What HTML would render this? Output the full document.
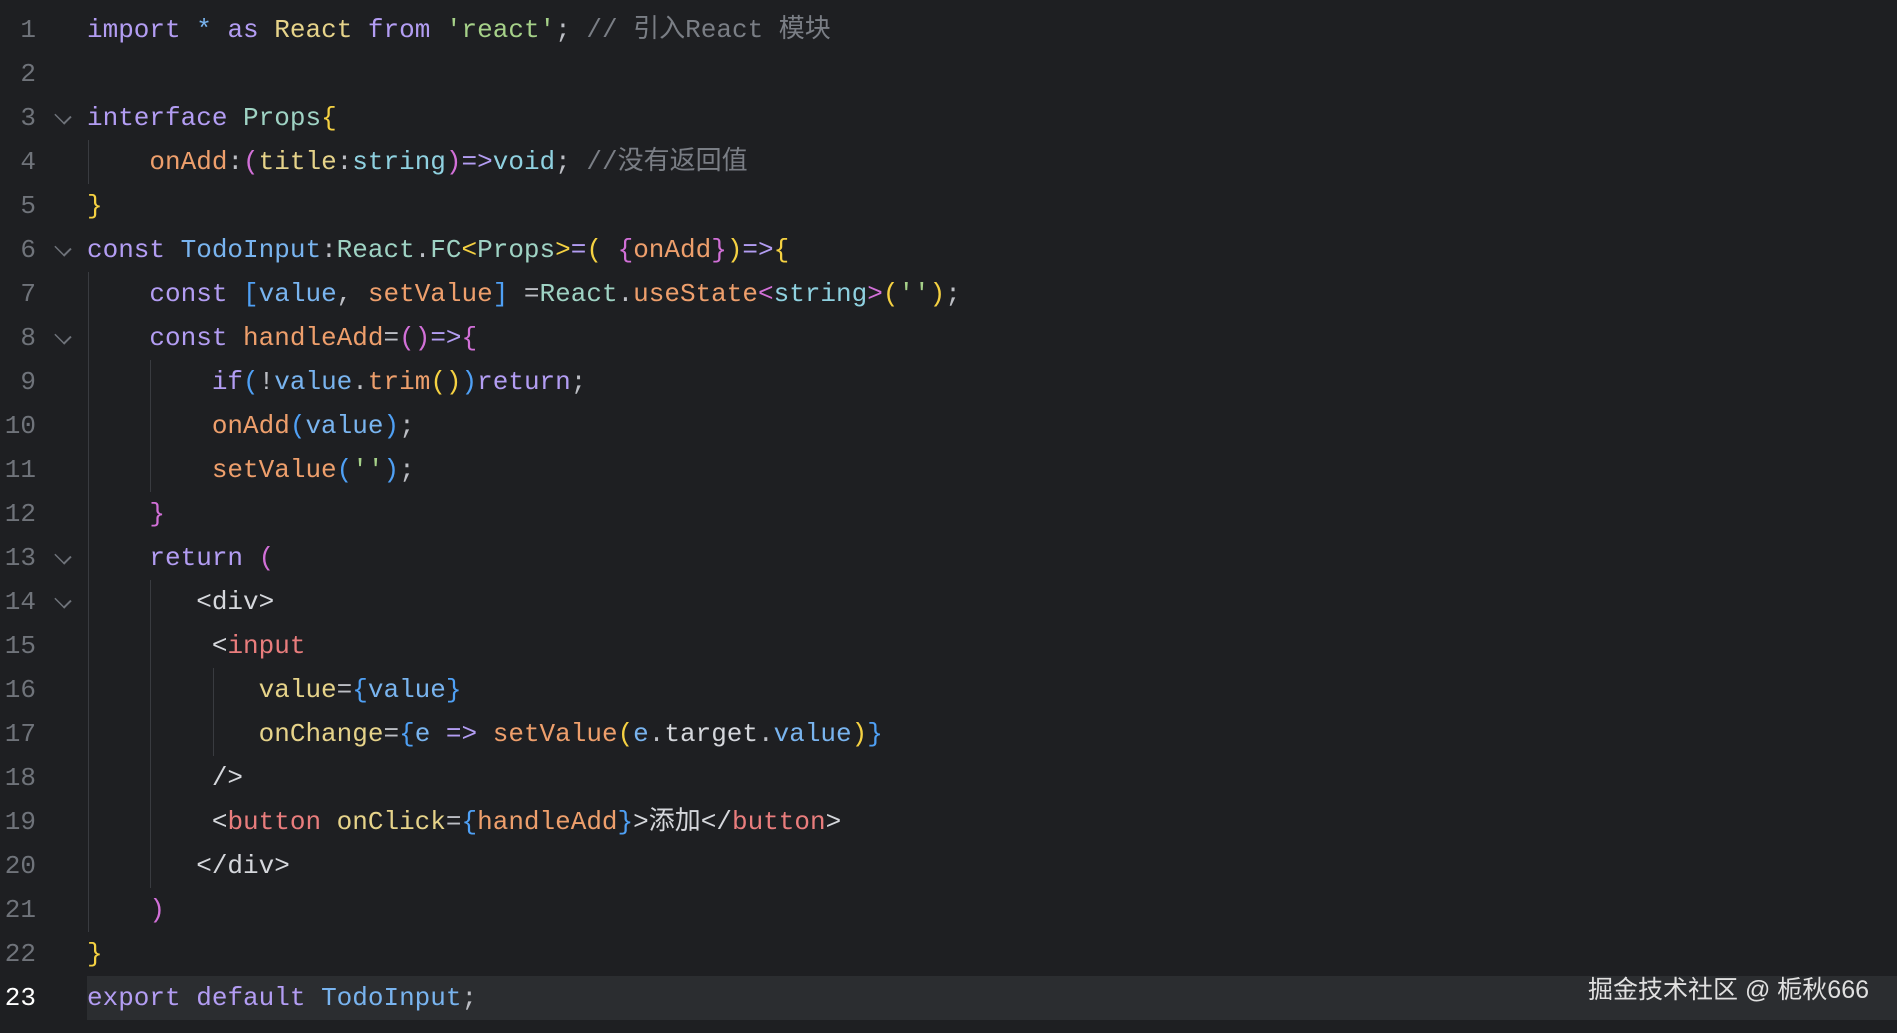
<!DOCTYPE html>
<html><head><meta charset="utf-8"><style>
body{margin:0;width:1897px;height:1033px;background:#1e1f22;overflow:hidden;position:relative;font-family:"Liberation Mono","Noto Sans CJK SC",monospace;font-size:26px;}
.l{position:absolute;left:0;height:44px;line-height:44px;white-space:pre;}
.n{position:absolute;left:0;width:36px;text-align:right;color:#6f737a;font-size:26px}
.c{position:absolute;left:87px;color:#bcbec4}
.f{position:absolute;left:56px;top:13px;width:12px;height:12px;border-right:2px solid #6f737a;border-bottom:2px solid #6f737a;transform:rotate(45deg) scale(1,0.75)}
.g{position:absolute;width:1px;background:#393b40}
.k{color:#b39df3}.y{color:#e6d38a}.t{color:#9fd3c4}.b{color:#79b4ef}.s{color:#a6d189}.o{color:#ee9f6c}.ty{color:#8fd1e0}.cm{color:#7a7e85}
.p1{color:#f5d142}.p2{color:#d270d8}.p3{color:#4fa0f5}.at{color:#e6d38a}.tg{color:#e97d7d}.w{color:#d5d7dc}
</style></head><body>
<div style="position:absolute;left:87px;top:976px;width:1810px;height:44px;background:#2b2d30"></div>
<div class="g" style="left:88px;top:140px;height:44px"></div>
<div class="g" style="left:88px;top:272px;height:660px"></div>
<div class="g" style="left:150px;top:360px;height:132px"></div>
<div class="g" style="left:150px;top:580px;height:308px"></div>
<div class="g" style="left:213px;top:668px;height:88px"></div>

<div class="l" style="top:8px"><span class="n">1</span><span class="c"><span class="k">import</span> <span class="b">*</span> <span class="k">as</span> <span class="y">React</span> <span class="k">from</span> <span class="s">'react'</span>; <span class="cm">// 引入React 模块</span></span></div>
<div class="l" style="top:52px"><span class="n">2</span></div>
<div class="l" style="top:96px"><span class="n">3</span><i class="f"></i><span class="c"><span class="k">interface</span> <span class="t">Props</span><span class="p1">{</span></span></div>
<div class="l" style="top:140px"><span class="n">4</span><span class="c">    <span class="o">onAdd</span>:<span class="p2">(</span><span class="y">title</span>:<span class="ty">string</span><span class="p2">)</span><span class="k">=&gt;</span><span class="ty">void</span>; <span class="cm">//没有返回值</span></span></div>
<div class="l" style="top:184px"><span class="n">5</span><span class="c"><span class="p1">}</span></span></div>
<div class="l" style="top:228px"><span class="n">6</span><i class="f"></i><span class="c"><span class="k">const</span> <span class="b">TodoInput</span>:<span class="t">React</span>.<span class="t">FC</span><span class="p1">&lt;</span><span class="t">Props</span><span class="p1">&gt;</span><span class="k">=</span><span class="p1">(</span> <span class="p2">{</span><span class="o">onAdd</span><span class="p2">}</span><span class="p1">)</span><span class="k">=&gt;</span><span class="p1">{</span></span></div>
<div class="l" style="top:272px"><span class="n">7</span><span class="c">    <span class="k">const</span> <span class="p3">[</span><span class="b">value</span>, <span class="o">setValue</span><span class="p3">]</span> =<span class="t">React</span>.<span class="o">useState</span><span class="p2">&lt;</span><span class="ty">string</span><span class="p2">&gt;</span><span class="p1">(</span><span class="s">''</span><span class="p1">)</span>;</span></div>
<div class="l" style="top:316px"><span class="n">8</span><i class="f"></i><span class="c">    <span class="k">const</span> <span class="o">handleAdd</span>=<span class="p2">()</span><span class="k">=&gt;</span><span class="p2">{</span></span></div>
<div class="l" style="top:360px"><span class="n">9</span><span class="c">        <span class="k">if</span><span class="p3">(</span>!<span class="b">value</span>.<span class="o">trim</span><span class="p1">()</span><span class="p3">)</span><span class="k">return</span>;</span></div>
<div class="l" style="top:404px"><span class="n">10</span><span class="c">        <span class="o">onAdd</span><span class="p3">(</span><span class="b">value</span><span class="p3">)</span>;</span></div>
<div class="l" style="top:448px"><span class="n">11</span><span class="c">        <span class="o">setValue</span><span class="p3">(</span><span class="s">''</span><span class="p3">)</span>;</span></div>
<div class="l" style="top:492px"><span class="n">12</span><span class="c">    <span class="p2">}</span></span></div>
<div class="l" style="top:536px"><span class="n">13</span><i class="f"></i><span class="c">    <span class="k">return</span> <span class="p2">(</span></span></div>
<div class="l" style="top:580px"><span class="n">14</span><i class="f"></i><span class="c">       <span class="w">&lt;div&gt;</span></span></div>
<div class="l" style="top:624px"><span class="n">15</span><span class="c">        <span class="w">&lt;</span><span class="tg">input</span></span></div>
<div class="l" style="top:668px"><span class="n">16</span><span class="c">           <span class="at">value</span>=<span class="p3">{</span><span class="b">value</span><span class="p3">}</span></span></div>
<div class="l" style="top:712px"><span class="n">17</span><span class="c">           <span class="at">onChange</span>=<span class="p3">{</span><span class="b">e</span> <span class="k">=&gt;</span> <span class="o">setValue</span><span class="p1">(</span><span class="b">e</span>.<span class="w">target</span>.<span class="b">value</span><span class="p1">)</span><span class="p3">}</span></span></div>
<div class="l" style="top:756px"><span class="n">18</span><span class="c">        <span class="w">/&gt;</span></span></div>
<div class="l" style="top:800px"><span class="n">19</span><span class="c">        <span class="w">&lt;</span><span class="tg">button</span> <span class="at">onClick</span>=<span class="p3">{</span><span class="o">handleAdd</span><span class="p3">}</span><span class="w">&gt;添加&lt;/</span><span class="tg">button</span><span class="w">&gt;</span></span></div>
<div class="l" style="top:844px"><span class="n">20</span><span class="c">       <span class="w">&lt;/div&gt;</span></span></div>
<div class="l" style="top:888px"><span class="n">21</span><span class="c">    <span class="p2">)</span></span></div>
<div class="l" style="top:932px"><span class="n">22</span><span class="c"><span class="p1">}</span></span></div>
<div class="l" style="top:976px"><span class="n" style="color:#fff">23</span><span class="c"><span class="k">export</span> <span class="k">default</span> <span class="b">TodoInput</span>;</span></div>
<div style="position:absolute;right:28px;top:972px;white-space:nowrap;text-align:right;font-family:'Liberation Sans','Noto Sans CJK SC',sans-serif;font-size:25px;color:#e0e0e0;line-height:36px">掘金技术社区 @ 栀秋666</div>
</body></html>
